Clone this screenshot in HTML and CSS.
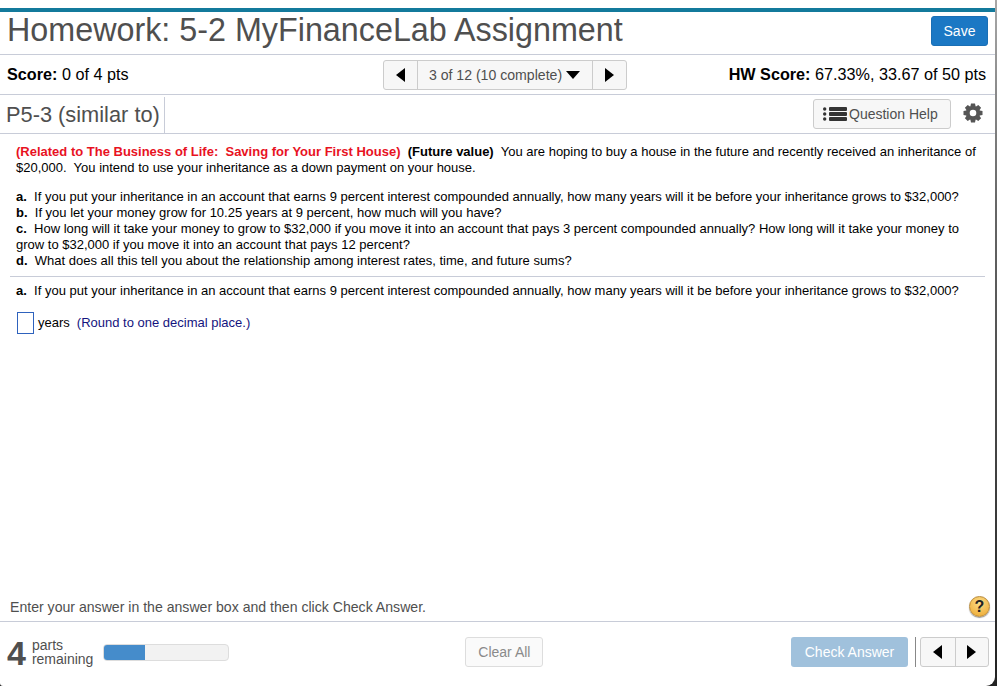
FILE: index.html
```html
<!DOCTYPE html>
<html lang="en">
<head>
    <meta charset="UTF-8">
    <title>Homework: 5-2 MyFinanceLab Assignment</title>
    <link rel="stylesheet" href="styles.css">
</head>
<body>
<div id="container">
    <div class="title-row">
        <h1>Homework: 5-2 MyFinanceLab Assignment</h1>
        <span class="save">Save</span>
    </div>
    <div class="score-row">
        <div class="score"><b>Score:</b> 0 of 4 pts</div>
        <div class="pager">
            <span class="pager-btn"><i class="tri-left"></i></span>
            <span class="pager-mid">3 of 12 (10 complete)<i class="tri-down"></i></span>
            <span class="pager-btn"><i class="tri-right"></i></span>
        </div>
        <div class="hw-score"><b>HW Score:</b> 67.33%, 33.67 of 50 pts</div>
    </div>
    <div class="question-row">
        <h2>P5-3 (similar to)</h2>
        <div class="tools">
            <span class="help">
                <svg class="help-icon" width="24" height="14" viewBox="0 0 24 14">
                    <circle cx="1.700" cy="2" r="1.700"/><circle cx="1.700" cy="7" r="1.700"/><circle cx="1.700" cy="12" r="1.700"/>
                    <rect x="6" y="0" width="18" height="4" rx="1"/><rect x="6" y="5" width="18" height="4" rx="1"/><rect x="6" y="10" width="18" height="4" rx="1"/>
                </svg>
                Question Help
            </span>
            <svg class="gear" width="20" height="20" viewBox="0 0 20 20">
                <path fill-rule="evenodd" d="M7.400 3.200L8 .5h4l.6 2.700.4.200 2.300-1.500 2.800 2.800-1.500 2.300.2.400 2.700.6v4l-2.700.6-.2.400 1.500 2.300-2.800 2.800-2.300-1.500-.4.200L12 19.500H8l-.6-2.700-.4-.2-2.300 1.500-2.800-2.800 1.500-2.300-.2-.4L.5 12V8l2.700-.6.200-.4-1.500-2.300 2.800-2.800L7 3.400zM10 6.700a3.300 3.300 0 1 0 0 6.600 3.300 3.300 0 0 0 0-6.600z"/>
            </svg>
        </div>
    </div>
    <div class="main">
        <p class="intro"><b class="red">(Related to The Business of Life:&nbsp; Saving for Your First House)</b>&nbsp; <b>(Future value)</b>&nbsp; You are hoping to buy a house in the future and recently received an inheritance of<br>$20,000.&nbsp; You intend to use your inheritance as a down payment on your house.</p>
        <p class="parts">
            <b>a.</b>&nbsp; If you put your inheritance in an account that earns 9 percent interest compounded annually, how many years will it be before your inheritance grows to $32,000?<br>
            <b>b.</b>&nbsp; If you let your money grow for 10.25 years at 9 percent, how much will you have?<br>
            <b>c.</b>&nbsp; How long will it take your money to grow to $32,000 if you move it into an account that pays 3 percent compounded annually? How long will it take your money to<br>
            grow to $32,000 if you move it into an account that pays 12 percent?<br>
            <b>d.</b>&nbsp; What does all this tell you about the relationship among interest rates, time, and future sums?
        </p>
        <div class="rule"></div>
        <p class="current"><b>a.</b>&nbsp; If you put your inheritance in an account that earns 9 percent interest compounded annually, how many years will it be before your inheritance grows to $32,000?</p>
        <div class="answer">
            <span class="answer-box"></span>
            <span>years</span>
            <span class="hint">(Round to one decimal place.)</span>
        </div>
    </div>
    <div class="instructions">
        <span>Enter your answer in the answer box and then click Check Answer.</span>
        <span class="q-mark">?</span>
    </div>
    <div class="footer">
        <span class="parts-num">4</span>
        <span class="parts-label">parts<br>remaining</span>
        <div class="progress"><div class="progress-bar"></div></div>
        <span class="clear">Clear All</span>
        <div class="footer-right">
            <span class="check">Check Answer</span>
            <span class="divider"></span>
            <div class="pager small">
                <span class="pager-btn"><i class="tri-left"></i></span>
                <span class="pager-btn"><i class="tri-right"></i></span>
            </div>
        </div>
    </div>
</div>
</body>
</html>
```

FILE: styles.css
```css
*{
    margin: 0;
    padding: 0;
    box-sizing: border-box;
}
html,body{
    height: 100%;
    overflow: hidden;
}
body{
    background: linear-gradient(180deg, #a8a8a8, #666 30%, #222);
    font-family: "Liberation Sans", Arial, sans-serif;
    color: #000;
}
#container{
    height: 686px;
    width: 995px;
    padding-top: 8px;
    display: flex;
    flex-direction: column;
    background: #fff;
    border-radius: 0 0 9px 3px;
}
.title-row{
    height: 47px;
    display: flex;
    align-items: center;
    justify-content: space-between;
    padding: 0 7px 0 7px;
    border-top: 4px solid #137a9c;
    border-bottom: 1px solid #c8ccd8;
}
h1{
    font-size: 32.3px;
    font-weight: normal;
    color: #4f4f4f;
    white-space: nowrap;
    margin-top: -6px;
}
.save{
    width: 57px;
    height: 30px;
    margin-top: -4px;
    background: #1b78c4;
    border: 1px solid #1a6fb5;
    border-radius: 3px;
    color: #fff;
    font-size: 14px;
    line-height: 28px;
    text-align: center;
}
.score-row{
    height: 40px;
    display: grid;
    grid-template-columns: 1fr auto 1fr;
    align-items: center;
    padding: 0 9px 0 7px;
    border-bottom: 1px solid #c8ccd8;
    font-size: 16.2px;
}
.hw-score{
    text-align: right;
}
.pager{
    display: flex;
    height: 30px;
    border: 1px solid #ccc;
    border-radius: 3px;
    background: #f7f7f7;
}
.score-row .pager{
    margin-left: 16px;
}
.pager-btn{
    width: 33px;
    display: flex;
    align-items: center;
    justify-content: center;
}
.pager-mid{
    width: 176px;
    border-left: 1px solid #ccc;
    border-right: 1px solid #ccc;
    display: flex;
    align-items: center;
    justify-content: center;
    gap: 4px;
    font-size: 14.1px;
    color: #4f4f4f;
    white-space: pre;
}
.pager.small{
    height: 30px;
    width: 69px;
}
.pager.small .pager-btn{
    width: 34px;
}
.pager.small .pager-btn + .pager-btn{
    border-left: 1px solid #ccc;
}
.tri-left,.tri-right,.tri-down{
    display: block;
    width: 0;
    height: 0;
    border-style: solid;
}
.tri-left{
    border-width: 7px 9px 7px 0;
    border-color: transparent #000 transparent transparent;
}
.tri-right{
    border-width: 7px 0 7px 9px;
    border-color: transparent transparent transparent #000;
}
.tri-down{
    border-width: 8px 7px 0 7px;
    border-color: #000 transparent transparent transparent;
}
.question-row{
    height: 39px;
    display: flex;
    align-items: center;
    justify-content: space-between;
    padding-right: 12px;
    border-bottom: 1px solid #c8ccd8;
}
h2{
    font-size: 21.8px;
    font-weight: normal;
    color: #4f4f4f;
    padding: 0 4px 0 6px;
    height: 36px;
    line-height: 36px;
    border-right: 1px solid #c8ccd8;
    margin-top: 1px;
}
.tools{
    display: flex;
    align-items: center;
    gap: 12px;
}
.help{
    width: 138px;
    height: 30px;
    display: flex;
    align-items: center;
    gap: 2px;
    padding-left: 9px;
    background: #f7f7f7;
    border: 1px solid #ccc;
    border-radius: 3px;
    font-size: 14px;
    color: #4f4f4f;
}
.help-icon{
    fill: #333;
}
.gear{
    fill: #555;
    margin-top: -2px;
}
.main{
    flex: 1;
    padding: 10px 10px 0 16px;
    font-size: 13px;
    line-height: 16px;
    white-space: nowrap;
}
.red{
    color: #e8121f;
}
.parts{
    margin-top: 13px;
}
.rule{
    margin: 7px 0 0 -6px;
    border-top: 1px solid #c8ccd8;
}
.current{
    margin-top: 6px;
}
.answer{
    display: flex;
    align-items: center;
    gap: 4px;
    margin-top: 13px;
    margin-left: 1px;
}
.answer-box{
    width: 17px;
    height: 22px;
    border: 1px solid #2e62bd;
}
.hint{
    color: #14147e;
    margin-left: 3px;
}
.instructions{
    height: 29px;
    display: flex;
    align-items: center;
    justify-content: space-between;
    padding: 0 5px 0 10px;
    border-bottom: 1px solid #c8ccd8;
    font-size: 14.1px;
    color: #4f4f4f;
}
.q-mark{
    width: 21px;
    height: 21px;
    margin-top: -1px;
    border-radius: 50%;
    background: radial-gradient(circle at 50% 30%, #fbdc88, #eca62c);
    border: 1px solid #b98a3a;
    box-shadow: 0 1px 1px rgba(0,0,0,.4);
    color: #222;
    font-weight: bold;
    font-size: 16px;
    line-height: 19px;
    text-align: center;
}
.footer{
    height: 64px;
    display: flex;
    align-items: flex-start;
    padding: 15px 6px 0 7px;
}
.parts-num{
    font-size: 34px;
    font-weight: bold;
    line-height: 32px;
    color: #4f4f4f;
}
.parts-label{
    font-size: 14px;
    line-height: 14px;
    color: #4f4f4f;
    margin-left: 6px;
    margin-top: 1px;
}
.progress{
    width: 126px;
    height: 17px;
    margin: 7px 0 0 10px;
    background: #f2f2f2;
    border: 1px solid #ddd;
    border-radius: 4px;
    overflow: hidden;
}
.progress-bar{
    width: 33%;
    height: 100%;
    background: #458ccb;
}
.clear{
    width: 78px;
    height: 30px;
    margin-left: 236px;
    background: #fafafa;
    border: 1px solid #ddd;
    border-radius: 3px;
    color: #8a8a8a;
    font-size: 14px;
    line-height: 28px;
    text-align: center;
}
.footer-right{
    margin-left: auto;
    display: flex;
    align-items: center;
    gap: 4px;
}
.check{
    width: 117px;
    height: 30px;
    background: #a0c1dc;
    border-radius: 3px;
    color: #fff;
    font-size: 14px;
    line-height: 30px;
    text-align: center;
    margin-right: 3px;
}
.divider{
    width: 1px;
    height: 30px;
    background: #888;
}
```
